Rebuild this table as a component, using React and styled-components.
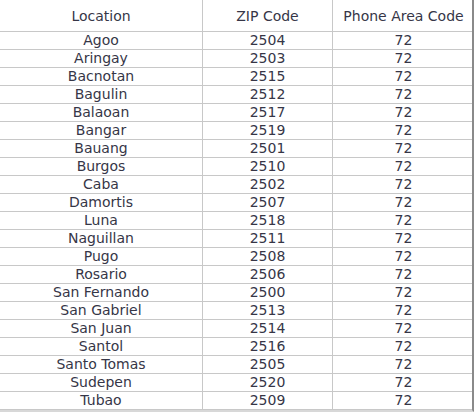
import React from 'react';
import styled, { createGlobalStyle } from 'styled-components';

const GlobalStyle = createGlobalStyle`
  html, body {
    margin: 0;
    padding: 0;
    background: #ffffff;
  }
  body {
    font-family: "DejaVu Sans", Verdana, sans-serif;
    color: #363647;
  }
`;

const rows = [
  ['Agoo', '2504', '72'],
  ['Aringay', '2503', '72'],
  ['Bacnotan', '2515', '72'],
  ['Bagulin', '2512', '72'],
  ['Balaoan', '2517', '72'],
  ['Bangar', '2519', '72'],
  ['Bauang', '2501', '72'],
  ['Burgos', '2510', '72'],
  ['Caba', '2502', '72'],
  ['Damortis', '2507', '72'],
  ['Luna', '2518', '72'],
  ['Naguillan', '2511', '72'],
  ['Pugo', '2508', '72'],
  ['Rosario', '2506', '72'],
  ['San Fernando', '2500', '72'],
  ['San Gabriel', '2513', '72'],
  ['San Juan', '2514', '72'],
  ['Santol', '2516', '72'],
  ['Santo Tomas', '2505', '72'],
  ['Sudepen', '2520', '72'],
  ['Tubao', '2509', '72'],
];

const Frame = styled.div`
  width: 474px;
  height: 412px;
  overflow: hidden;
  box-sizing: border-box;
  border-right: 2px solid #8a8a8a;
  border-bottom: 2px solid #d8d8d8;
`;

const Table = styled.table`
  width: 472px;
  border-collapse: collapse;
  table-layout: fixed;
`;

const HeadCell = styled.th`
  width: ${(p) => p.$w}px;
  height: 31px;
  padding: 0;
  font-weight: normal;
  font-size: 14px;
  text-align: center;
  vertical-align: middle;
  border-bottom: 1px solid #c8c8c8;
  border-left: ${(p) => (p.$first ? 'none' : '1px solid #c8c8c8')};
`;

const Cell = styled.td`
  height: 17px;
  padding: 0;
  font-size: 14px;
  line-height: 17px;
  text-align: center;
  border-bottom: 1px solid #c8c8c8;
  border-left: ${(p) => (p.$first ? 'none' : '1px solid #c8c8c8')};
  white-space: nowrap;
`;

export default function App() {
  return (
    <>
      <GlobalStyle />
      <Frame>
        <Table>
          <thead>
            <tr>
              <HeadCell $w={202} $first>Location</HeadCell>
              <HeadCell $w={129}>ZIP Code</HeadCell>
              <HeadCell $w={141}>Phone Area Code</HeadCell>
            </tr>
          </thead>
          <tbody>
            {rows.map(([loc, zip, code]) => (
              <tr key={loc}>
                <Cell $first>{loc}</Cell>
                <Cell>{zip}</Cell>
                <Cell>{code}</Cell>
              </tr>
            ))}
          </tbody>
        </Table>
      </Frame>
    </>
  );
}
